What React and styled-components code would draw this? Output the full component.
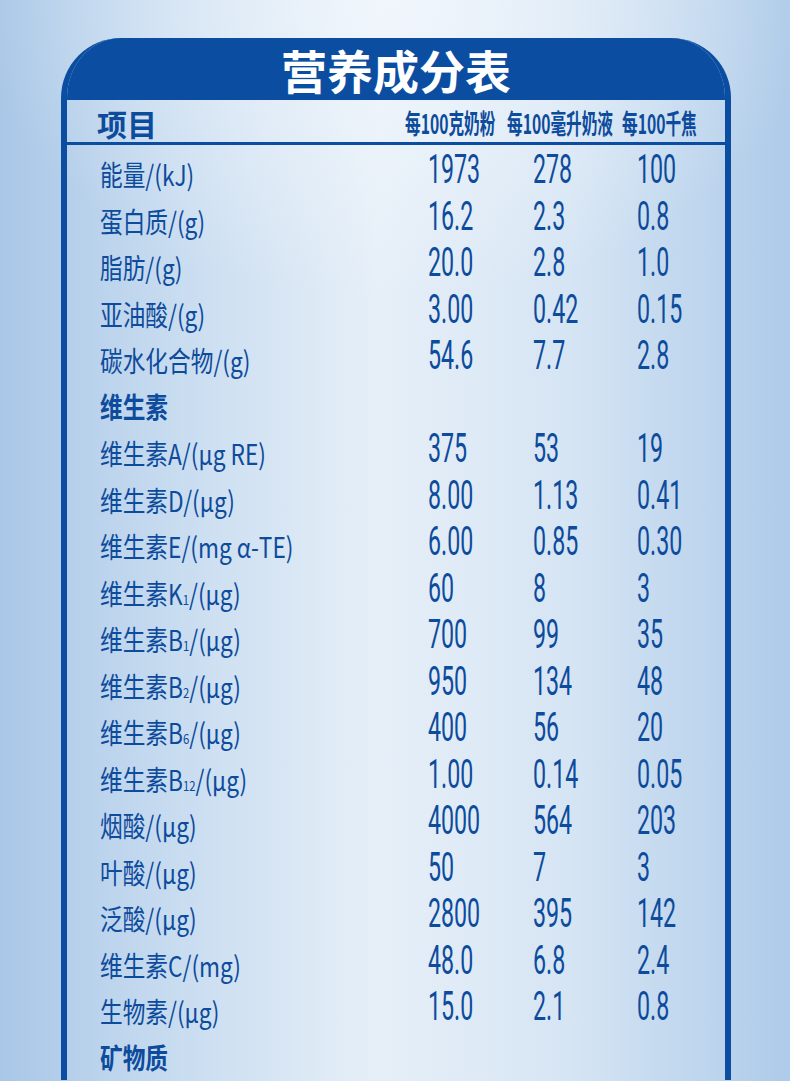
import React from 'react';
import styled, { createGlobalStyle } from 'styled-components';

const BLUE = '#0b4ea1';
const INK = '#0d4b9c';

const GlobalStyle = createGlobalStyle`
  html, body {
    margin: 0;
    padding: 0;
  }
  body {
    overflow: hidden;
    font-family: "Noto Sans CJK SC", "Noto Sans", sans-serif;
  }
`;

const rows = [
  { label: '能量/(kJ)', values: ['1973', '278', '100'] },
  { label: '蛋白质/(g)', values: ['16.2', '2.3', '0.8'] },
  { label: '脂肪/(g)', values: ['20.0', '2.8', '1.0'] },
  { label: '亚油酸/(g)', values: ['3.00', '0.42', '0.15'] },
  { label: '碳水化合物/(g)', values: ['54.6', '7.7', '2.8'] },
  { section: '维生素' },
  { label: '维生素A/(μg RE)', values: ['375', '53', '19'] },
  { label: '维生素D/(μg)', values: ['8.00', '1.13', '0.41'] },
  { label: '维生素E/(mg α-TE)', values: ['6.00', '0.85', '0.30'] },
  { label: '维生素K', sub: '1', unit: '/(μg)', values: ['60', '8', '3'] },
  { label: '维生素B', sub: '1', unit: '/(μg)', values: ['700', '99', '35'] },
  { label: '维生素B', sub: '2', unit: '/(μg)', values: ['950', '134', '48'] },
  { label: '维生素B', sub: '6', unit: '/(μg)', values: ['400', '56', '20'] },
  { label: '维生素B', sub: '12', unit: '/(μg)', values: ['1.00', '0.14', '0.05'] },
  { label: '烟酸/(μg)', values: ['4000', '564', '203'] },
  { label: '叶酸/(μg)', values: ['50', '7', '3'] },
  { label: '泛酸/(μg)', values: ['2800', '395', '142'] },
  { label: '维生素C/(mg)', values: ['48.0', '6.8', '2.4'] },
  { label: '生物素/(μg)', values: ['15.0', '2.1', '0.8'] },
  { section: '矿物质' },
];

const App = () => (
  <>
    <GlobalStyle />
    <Page>
      <Card>
        <Title>营养成分表</Title>
        <HeadRow>
          <ItemHead>项目</ItemHead>
          <ColHead>每100克奶粉</ColHead>
          <ColHead>每100毫升奶液</ColHead>
          <ColHead>每100千焦</ColHead>
        </HeadRow>
        <Body>
          {rows.map((row, i) =>
            row.section ? (
              <Row key={i}>
                <Label $bold>{row.section}</Label>
              </Row>
            ) : (
              <Row key={i}>
                <Label>
                  {row.label}
                  {row.sub && <Sub>{row.sub}</Sub>}
                  {row.unit}
                </Label>
                {row.values.map((v, j) => (
                  <Cell key={j}>
                    <Value>{v}</Value>
                  </Cell>
                ))}
              </Row>
            )
          )}
        </Body>
      </Card>
    </Page>
  </>
);

const Page = styled.div`
  height: 1081px;
  overflow: hidden;
  padding-top: 38px;
  box-sizing: border-box;
  background:
    radial-gradient(ellipse 420px 300px at 50% 0%, rgba(245, 249, 253, 0.7), rgba(245, 249, 253, 0) 100%),
    linear-gradient(90deg, #a9c7e7 0%, #c8dcf0 22%, #e6eff8 48%, #d6e5f4 72%, #aecbe9 100%);
`;

const Card = styled.div`
  margin-left: 61px;
  width: 670px;
  box-sizing: border-box;
  border-left: 6px solid ${BLUE};
  border-right: 6px solid ${BLUE};
  border-radius: 60px 60px 0 0;
`;

const Title = styled.h1`
  margin: 0;
  padding: 4px 0 3px;
  background: ${BLUE};
  border-radius: 54px 54px 0 0 / 60px 60px 0 0;
  color: #fff;
  text-align: center;
  font-family: "Noto Sans CJK SC", sans-serif;
  font-weight: 700;
  font-size: 46px;
  line-height: 55px;
`;

const HeadRow = styled.div`
  display: grid;
  grid-template-columns: 308px 102px 115px 1fr;
  align-items: center;
  height: 42px;
  padding-left: 30px;
  border-bottom: 3px solid ${BLUE};
  color: ${INK};
`;

const ItemHead = styled.div`
  font-family: "Noto Sans CJK SC", sans-serif;
  font-weight: 700;
  font-size: 30px;
  line-height: 1;
  padding-top: 4px;
`;

const ColHead = styled.div`
  font-family: "Noto Sans CJK SC", sans-serif;
  font-weight: 700;
  font-size: 27px;
  line-height: 1;
  white-space: nowrap;
  transform: scaleX(0.58);
  transform-origin: left center;
  padding-top: 3px;
`;

const Body = styled.div`
  padding-top: 5px;
`;

const Row = styled.div`
  display: grid;
  grid-template-columns: 328px 105px 104px 1fr;
  align-items: center;
  height: 46.5px;
  padding-left: 33px;
  color: ${INK};
`;

const Label = styled.div`
  font-family: "Noto Sans CJK SC", sans-serif;
  font-weight: ${(p) => (p.$bold ? 700 : 400)};
  font-size: 28px;
  line-height: 1;
  white-space: nowrap;
  transform: scaleX(0.81);
  transform-origin: left center;
`;

const Sub = styled.span`
  font-size: 0.5em;
  vertical-align: baseline;
`;

const Cell = styled.div`
  white-space: nowrap;
  padding-bottom: 8px;
`;

const Value = styled.span`
  display: inline-block;
  font-family: Roboto, "Liberation Sans", sans-serif;
  font-weight: 400;
  font-size: 40px;
  line-height: 1;
  transform: scaleX(0.58);
  transform-origin: left center;
`;

export default App;
